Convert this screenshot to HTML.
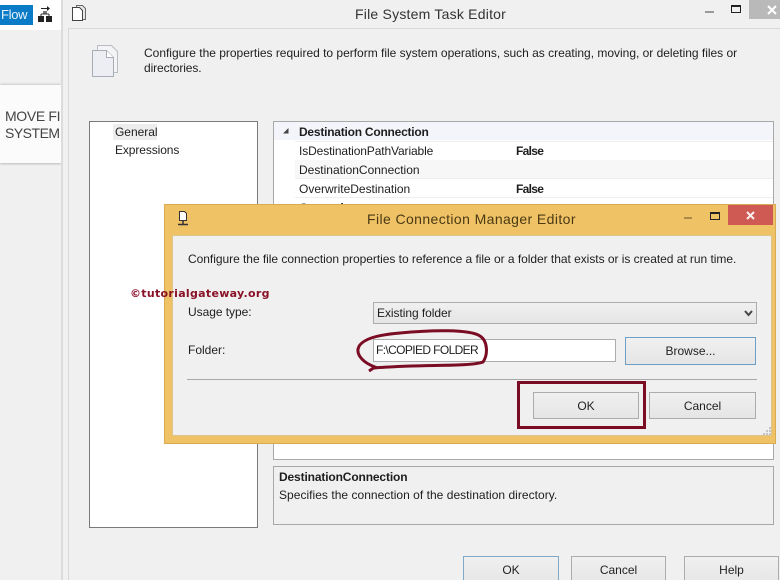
<!DOCTYPE html>
<html style="overflow:hidden;width:780px;height:580px"><head><meta charset="utf-8">
<style>
html,body{margin:0;padding:0}
body{width:780px;height:580px;overflow:hidden;position:relative;background:#f0f0f0;font-family:"Liberation Sans",sans-serif;font-size:12px;color:#1e1e1e}
#w{position:absolute;left:0;top:0;width:780px;height:580px;overflow:hidden}
.a{position:absolute;box-sizing:border-box}
.t{position:absolute;white-space:nowrap;line-height:16px;height:16px}
.b{font-weight:bold}
.btn{position:absolute;box-sizing:border-box;border:1px solid #acacac;background:linear-gradient(#f0f0f0,#e5e5e5);text-align:center;color:#222}
</style></head><body><div id="w">
<!-- left strip -->
<div class="a" style="left:0;top:0;width:61px;height:30px;background:#fff"></div>
<div class="a" style="left:0;top:5px;width:33px;height:20px;background:#0a7bc6;color:#e8f4fc;padding-left:1px;line-height:20px;font-size:13px;letter-spacing:-.3px;overflow:hidden">Flow</div>
<svg class="a" style="left:37px;top:6px" width="16" height="16" viewBox="0 0 16 16"><path d="M1 10h6v6H1zM9 10h6v6H9z" fill="#222"/><path d="M6 5h4v3H6z" fill="#777"/><path d="M4 8h8M4 8v2M12 8v2" stroke="#333" fill="none"/><path d="M4 2h6v-2l3 2.500-3 2.500v-2H4z" fill="#222"/></svg>
<div class="a" style="left:0;top:30px;width:61px;height:54px;background:#f0f0f0"></div>
<div class="a" style="left:0;top:85px;width:61px;height:78px;background:#fbfbfc;box-shadow:0 -1px 2px #ccc,0 1px 2px #bbb"></div>
<div class="t" style="left:5px;top:108px;font-size:14px;color:#444;letter-spacing:-.35px;width:56px;overflow:hidden">MOVE FI</div>
<div class="t" style="left:5px;top:125px;font-size:14px;color:#444;letter-spacing:-.5px">SYSTEM</div>
<div class="a" style="left:61px;top:0;width:2px;height:580px;background:#dcdcdc"></div>
<div class="a" style="left:63px;top:0;width:717px;height:580px;background:#f0f0f0"></div>
<div class="a" style="left:68px;top:28px;width:712px;height:552px;border-top:1px solid #d9d9d9;border-left:1px solid #d9d9d9;background:#f0f0f0"></div>
<!-- title icon -->
<svg class="a" style="left:71px;top:4px" width="16" height="18" viewBox="0 0 16 18"><path d="M5.500 1.500h6l3 3v11h-9z" fill="#e8e8e8" stroke="#666"/><path d="M1.500 3.500h7l3 3v10h-10z" fill="#fff" stroke="#444"/></svg>
<div class="t" style="left:355px;top:6px;font-size:14px;color:#333;letter-spacing:.22px">File System Task Editor</div>
<div class="a" style="left:705px;top:11px;width:9px;height:2px;background:#9a9a9a"></div>
<div class="a" style="left:731px;top:5px;width:10px;height:8px;border:1px solid #222;border-top-width:2px"></div>
<div class="a" style="left:749px;top:0;width:31px;height:19px;background:#b9b9b9"></div>
<svg class="a" style="left:766px;top:4px" width="12" height="12" viewBox="0 0 12 12"><path d="M2 2l8 8M10 2l-8 8" stroke="#fff" stroke-width="2"/></svg>
<!-- description icon -->
<svg class="a" style="left:91px;top:44px" width="28" height="34" viewBox="0 0 28 34"><path d="M6.500 1.500h14l6 6v21h-20z" fill="#f4f4f6" stroke="#b8bcc4"/><path d="M1.500 6.500h14l7 7v19h-21z" fill="#eceef4" stroke="#a8acb6"/><path d="M15.500 6.500v7h7" fill="#fff" stroke="#a8acb6"/></svg>
<div class="t" style="left:144px;top:45px;letter-spacing:-.01px">Configure the properties required to perform file system operations, such as creating, moving, or deleting files or</div>
<div class="t" style="left:144px;top:60px;letter-spacing:-.1px">directories.</div>
<!-- left pane -->
<div class="a" style="left:89px;top:121px;width:169px;height:407px;background:#fff;border:1px solid #7a7a7a"></div>
<div class="a" style="left:113px;top:124px;width:44px;height:16px;background:#ededed"></div>
<div class="t" style="left:115px;top:124px;letter-spacing:-.03px">General</div>
<div class="t" style="left:115px;top:142px;letter-spacing:-.1px">Expressions</div>
<!-- property grid -->
<div class="a" style="left:273px;top:121px;width:501px;height:339px;background:#fff;border:1px solid #a8a8a8"></div>
<div class="a" style="left:274px;top:122px;width:499px;height:18px;background:#f3f5fa"></div>
<div class="a" style="left:295px;top:160px;width:478px;height:19px;background:#f7f7f8"></div>
<div class="a" style="left:295px;top:141px;width:478px;height:1px;background:#eee"></div>
<div class="a" style="left:295px;top:178px;width:478px;height:1px;background:#eee"></div>
<div class="a" style="left:295px;top:197px;width:478px;height:1px;background:#eee"></div>
<svg class="a" style="left:282px;top:127px" width="8" height="8" viewBox="0 0 8 8"><path d="M1 6.500L6.500 6.500 6.500 1z" fill="#444"/></svg>
<div class="t b" style="left:299px;top:124px;letter-spacing:-.23px">Destination Connection</div>
<div class="t" style="left:299px;top:143px;letter-spacing:-.12px">IsDestinationPathVariable</div>
<div class="t b" style="left:516px;top:143px;letter-spacing:-.7px">False</div>
<div class="t" style="left:299px;top:162px;letter-spacing:-.01px">DestinationConnection</div>
<div class="t" style="left:299px;top:181px;letter-spacing:-.01px">OverwriteDestination</div>
<div class="t b" style="left:516px;top:181px;letter-spacing:-.7px">False</div>
<div class="t b" style="left:299px;top:200px">General</div>
<!-- description box -->
<div class="a" style="left:273px;top:466px;width:501px;height:59px;border:1px solid #a8a8a8;background:#f0f0f0"></div>
<div class="t b" style="left:279px;top:469px;letter-spacing:-.14px">DestinationConnection</div>
<div class="t" style="left:279px;top:487px;letter-spacing:.03px">Specifies the connection of the destination directory.</div>
<!-- bottom buttons -->
<div class="btn" style="left:463px;top:556px;width:96px;height:30px;border-color:#7fa9c9;line-height:26px">OK</div>
<div class="btn" style="left:571px;top:556px;width:95px;height:30px;line-height:26px">Cancel</div>
<div class="btn" style="left:684px;top:556px;width:95px;height:30px;line-height:26px">Help</div>
<!-- dialog -->
<div class="a" style="left:164px;top:204px;width:612px;height:240px;background:#efc266;border:1px solid #d8ab52"></div>
<div class="a" style="left:172px;top:235px;width:600px;height:201px;background:#f0f0f0;border:1px solid #dcc48c"></div>
<svg class="a" style="left:176px;top:210px" width="14" height="18" viewBox="0 0 14 18"><path d="M3.500 1.500h5l2 2v7h-7z" fill="#fff" stroke="#333"/><path d="M7 11v3M2 14.500h10" stroke="#333" stroke-width="1.500"/></svg>
<div class="t" style="left:367px;top:211px;font-size:14px;color:#4a3a14;letter-spacing:.4px">File Connection Manager Editor</div>
<div class="a" style="left:684px;top:217px;width:8px;height:2px;background:#a98a48"></div>
<div class="a" style="left:710px;top:212px;width:10px;height:8px;border:1px solid #222;border-top-width:2px"></div>
<div class="a" style="left:728px;top:205px;width:45px;height:20px;background:#cf5a54"></div>
<svg class="a" style="left:745px;top:210px" width="11" height="11" viewBox="0 0 11 11"><path d="M2 2l7 7M9 2l-7 7" stroke="#fbeeee" stroke-width="2"/></svg>
<div class="t" style="left:188px;top:251px;letter-spacing:-.036px">Configure the file connection properties to reference a file or a folder that exists or is created at run time.</div>
<div class="t" style="left:188px;top:304px;letter-spacing:-.05px">Usage type:</div>
<div class="t" style="left:188px;top:342px">Folder:</div>
<div class="a" style="left:373px;top:302px;width:384px;height:22px;border:1px solid #acacac;background:linear-gradient(#f0f0f0,#e5e5e5)"></div>
<div class="t" style="left:377px;top:305px;letter-spacing:-.05px">Existing folder</div>
<svg class="a" style="left:743px;top:308px" width="11" height="10" viewBox="0 0 11 10"><path d="M2 3l3.500 4L9 3" fill="none" stroke="#444" stroke-width="2"/></svg>
<div class="a" style="left:373px;top:339px;width:243px;height:23px;background:#fff;border:1px solid #acacac"></div>
<div class="t" style="left:376px;top:342px;letter-spacing:-.62px">F:\COPIED FOLDER</div>
<div class="btn" style="left:625px;top:337px;width:131px;height:28px;border-color:#6f9fc4;line-height:27px">Browse...</div>
<div class="a" style="left:187px;top:379px;width:570px;height:1px;background:#a8a8a8"></div>
<div class="btn" style="left:533px;top:392px;width:106px;height:27px;line-height:26px">OK</div>
<div class="btn" style="left:649px;top:392px;width:107px;height:27px;line-height:26px">Cancel</div>
<div class="a" style="left:517px;top:381px;width:129px;height:48px;border:3px solid #7a0c24"></div>
<svg class="a" style="left:0;top:0" width="780" height="580" viewBox="0 0 780 580"><path d="M369 371L375 367C364 363 357 356 358 349C360 340 375 335 400 333C430 330 470 329 480 336C488 341 488 355 483 362C470 367 420 364 374 368" fill="none" stroke="#7a0c24" stroke-width="3"/></svg>
<svg class="a" style="left:762px;top:426px" width="10" height="10" viewBox="0 0 10 10"><path d="M7 1h2v2H7zM4 4h2v2H4zM7 4h2v2H7zM1 7h2v2H1zM4 7h2v2H4zM7 7h2v2H7z" fill="#c4c4c4"/></svg>
<div class="t b" style="left:130px;top:286px;font-family:'DejaVu Sans',sans-serif;font-size:11px;color:#8a1228;letter-spacing:.3px">©tutorialgateway.org</div>
</div></body></html>
